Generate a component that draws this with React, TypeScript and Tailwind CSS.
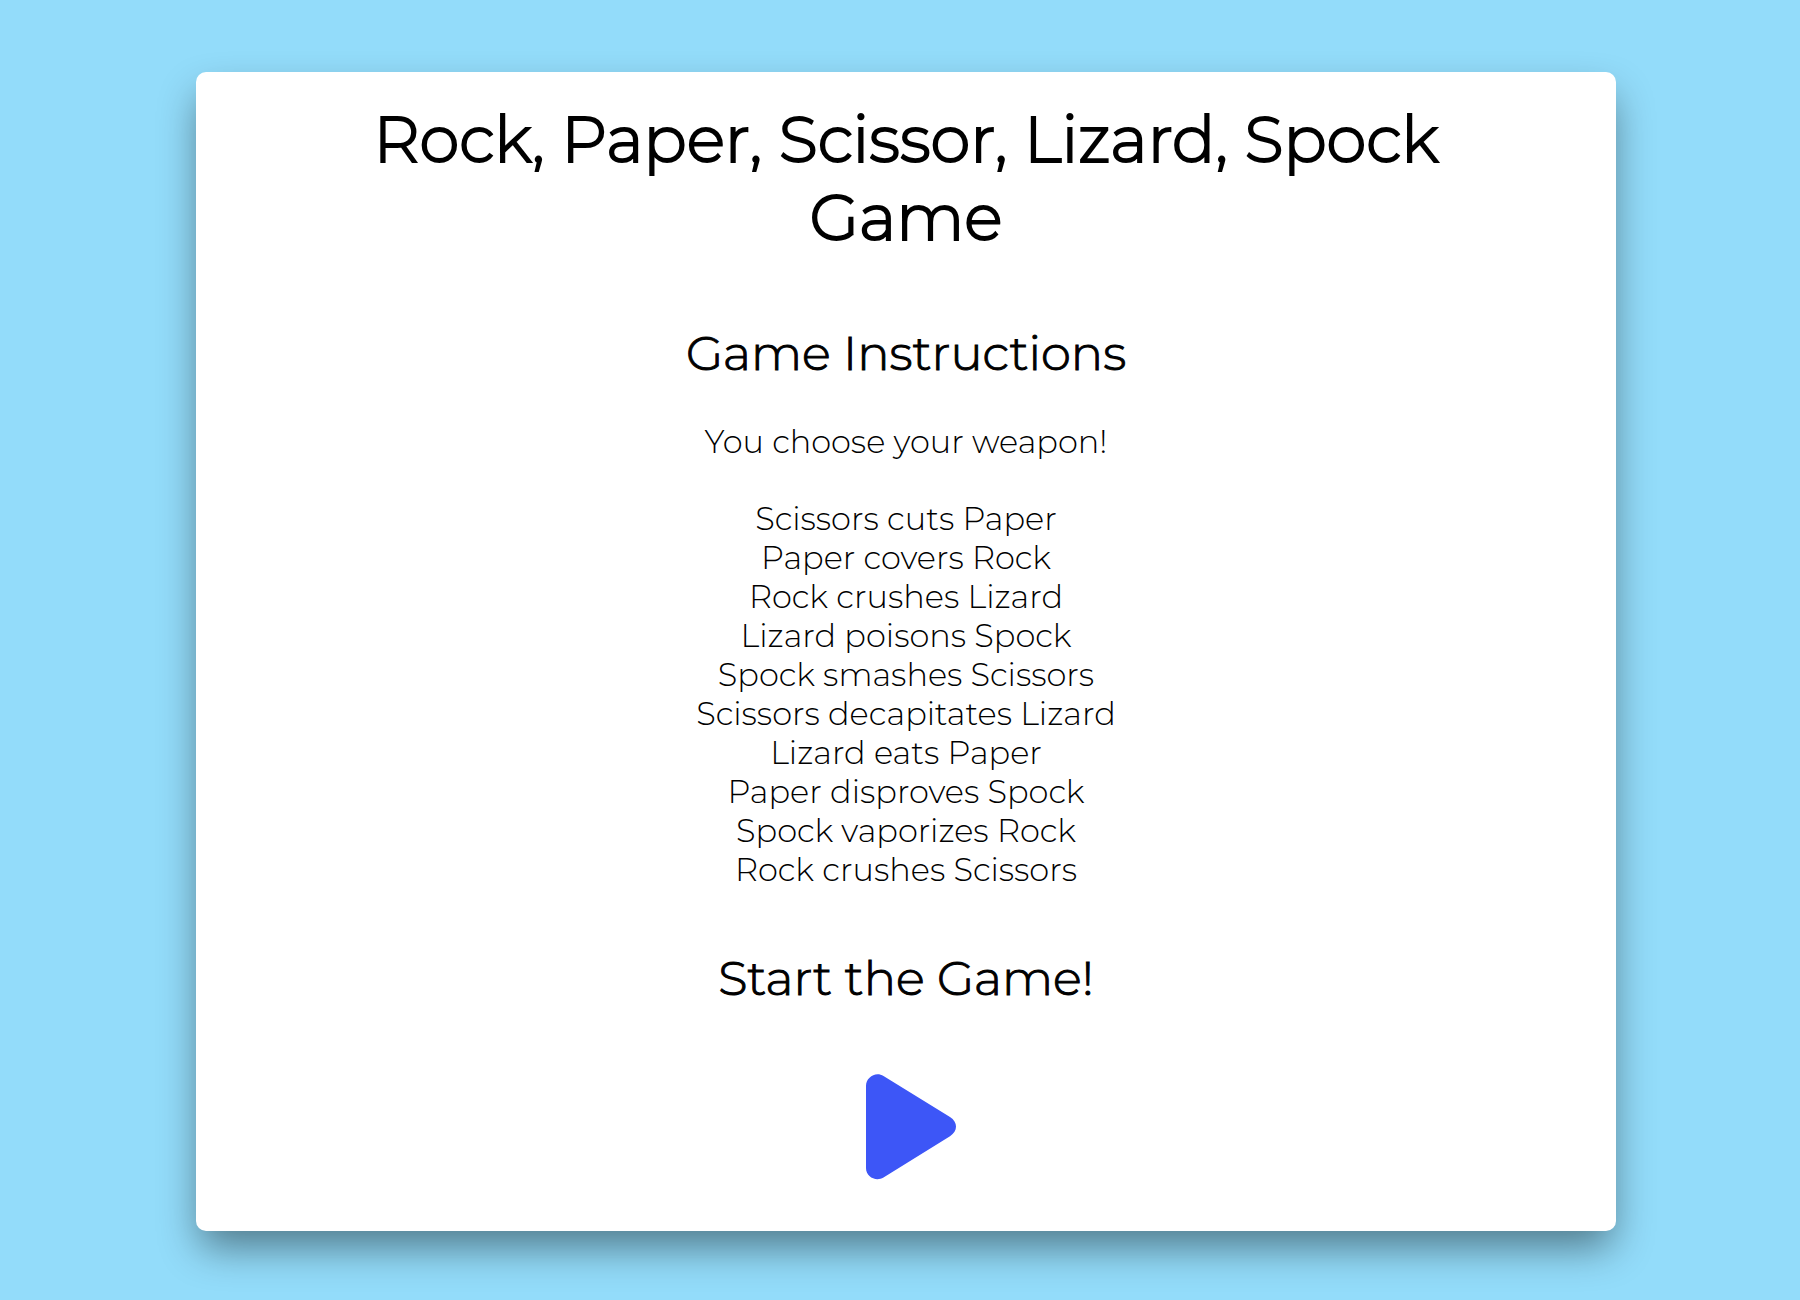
const rules = [
  "Scissors cuts Paper",
  "Paper covers Rock",
  "Rock crushes Lizard",
  "Lizard poisons Spock",
  "Spock smashes Scissors",
  "Scissors decapitates Lizard",
  "Lizard eats Paper",
  "Paper disproves Spock",
  "Spock vaporizes Rock",
  "Rock crushes Scissors",
];

export default function App() {
  return (
    <div className="min-h-screen bg-[#93dcfa] pt-[72px] pr-[184px] pb-16 pl-[196px] text-center font-['Montserrat','Inter',sans-serif] font-light text-black">
      <main className="flex flex-col items-center rounded-[10px] bg-white px-40 pt-7 pb-[42px] shadow-[0_20px_40px_-4px_rgba(0,0,0,0.45)]">
        <h1 className="text-[64px] leading-[78px] [-webkit-text-stroke:2px_black]">
          Rock, Paper, Scissor, Lizard, Spock Game
        </h1>
        <h2 className="mt-[68px] text-[48px] leading-[58px] [-webkit-text-stroke:1px_black]">Game Instructions</h2>
        <p className="mt-10 text-[32px] leading-[39px]">You choose your weapon!</p>
        <ul className="mt-[38px] text-[32px] leading-[39px]">
          {rules.map((rule) => (
            <li key={rule}>{rule}</li>
          ))}
        </ul>
        <h2 className="mt-[60px] text-[48px] leading-[58px] [-webkit-text-stroke:1px_black]">Start the Game!</h2>
        <button type="button" aria-label="Start the game" className="mt-[58px] text-[#3d56f7]">
          <svg viewBox="0 0 124 124" className="size-[124px]" fill="currentColor" aria-hidden="true">
            <path d="M22 21C22 12 32 6 39.500 11L106 52C114 57 114 66 106 71.200L39.500 112.500C32 117 22 112 22 103Z" />
          </svg>
        </button>
      </main>
    </div>
  );
}
